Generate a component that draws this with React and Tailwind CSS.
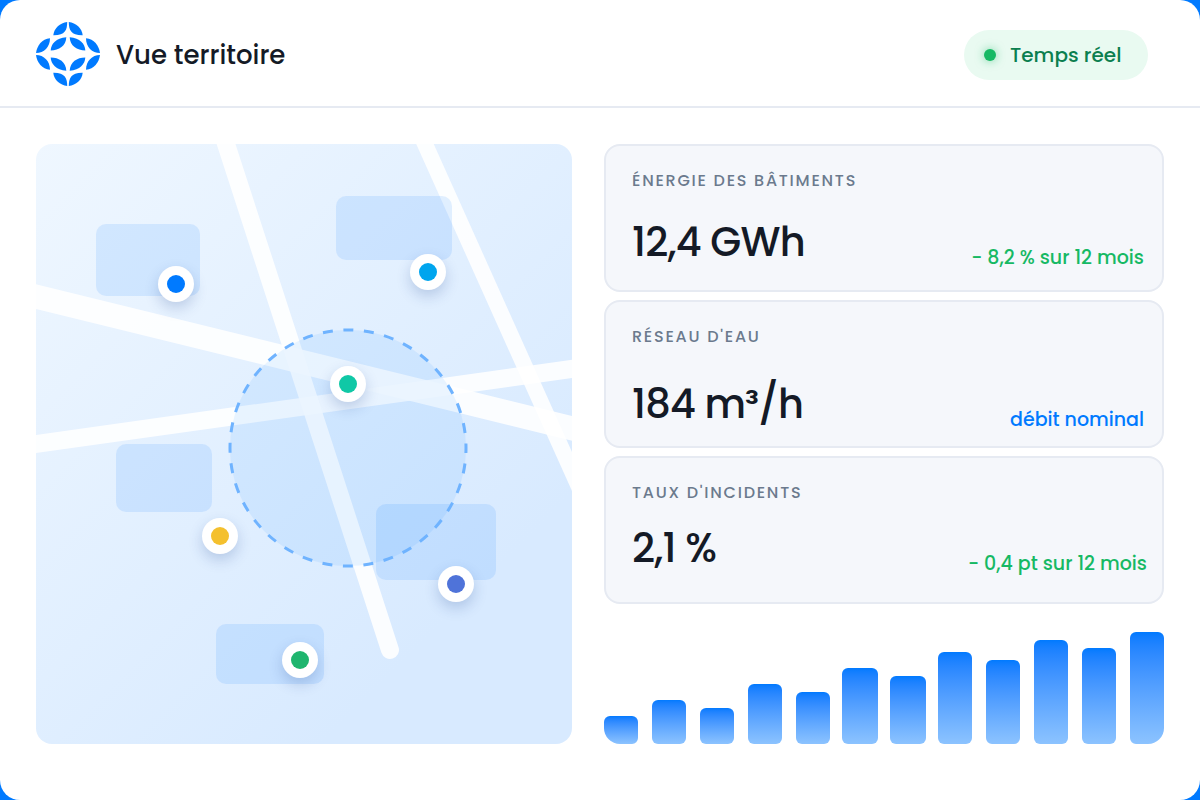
import React from "react";

const FONT = "font-['Poppins','Inter','Liberation_Sans',sans-serif]";

function Logo() {
  const leaves = [
    "M-14.7 -18.7 C-14 -26 -8 -31 -0.8 -32 C-0.8 -24 -3 -18.5 -14.7 -18.7 Z",
    "M-17.3 -3.5 C-17 -10 -12 -16 -1.7 -16.7 C-2 -8 -9 -3.5 -17.3 -3.5 Z",
    "M-32 -0.9 C-31 -8.5 -26 -15 -18 -15.7 C-18 -7 -24 -0.9 -32 -0.9 Z",
  ];
  const tf = ["scale(1 1)", "scale(-1 1)", "scale(1 -1)", "scale(-1 -1)"];
  return (
    <svg width="64" height="64" viewBox="-32 -32 64 64" className="shrink-0">
      {tf.map((t) => (
        <g key={t} transform={t} fill="#007aff">
          {leaves.map((d) => (
            <path key={d} d={d} />
          ))}
        </g>
      ))}
    </svg>
  );
}

function Pin({ pos, dot }) {
  return (
    <div
      className={`absolute w-9 h-9 rounded-full bg-white flex items-center justify-center shadow-[0_6px_14px_rgba(30,70,140,0.22)] ${pos}`}
    >
      <div className={`w-[18px] h-[18px] rounded-full ${dot}`} />
    </div>
  );
}

function Building({ pos }) {
  return <div className={`absolute rounded-[10px] bg-[rgba(0,122,255,0.11)] ${pos}`} />;
}

function MapPanel() {
  return (
    <div className="relative w-[536px] h-[600px] shrink-0 rounded-2xl overflow-hidden bg-[linear-gradient(135deg,#eff7ff_0%,#d8eaff_78%,#d8eaff_100%)]">
      <svg width="536" height="600" viewBox="0 0 536 600" className="absolute left-0 top-0">
        <g stroke="#ffffff" strokeOpacity="0.88" fill="none">
          <line x1="-20" y1="147.6" x2="560" y2="290.3" strokeWidth="24" />
          <line x1="-20" y1="302.8" x2="560" y2="221.6" strokeWidth="18" />
          <line x1="180.3" y1="-30" x2="354" y2="506" strokeWidth="18" strokeLinecap="round" />
          <line x1="375.5" y1="-30" x2="560" y2="381" strokeWidth="16" />
        </g>
      </svg>
      <Building pos="left-[60px] top-[80px] w-[104px] h-[72px]" />
      <Building pos="left-[300px] top-[52px] w-[116px] h-[64px]" />
      <Building pos="left-[80px] top-[300px] w-[96px] h-[68px]" />
      <Building pos="left-[340px] top-[360px] w-[120px] h-[76px]" />
      <Building pos="left-[180px] top-[480px] w-[108px] h-[60px]" />
      <svg width="536" height="600" viewBox="0 0 536 600" className="absolute left-0 top-0">
        <circle
          cx="312"
          cy="304"
          r="118"
          fill="rgba(0,122,255,0.08)"
          stroke="#6fb3ff"
          strokeWidth="3"
          strokeDasharray="10 10.6"
          strokeDashoffset="5"
        />
      </svg>
      <Pin pos="left-[122px] top-[122px]" dot="bg-[#007aff]" />
      <Pin pos="left-[374px] top-[110px]" dot="bg-[#00a5ee]" />
      <Pin pos="left-[294px] top-[222px]" dot="bg-[#10c8a6]" />
      <Pin pos="left-[166px] top-[374px]" dot="bg-[#f4c02e]" />
      <Pin pos="left-[402px] top-[422px]" dot="bg-[#4f73d9]" />
      <Pin pos="left-[246px] top-[498px]" dot="bg-[#1fb56e]" />
    </div>
  );
}

function Card({ label, value, note, noteColor, valueTop, noteClass }) {
  return (
    <div className="relative h-[148px] rounded-2xl bg-[#f5f7fb] border-2 border-[#e6eaf2] px-[26px] pt-[24px]">
      <div className="text-[16px] leading-[21px] font-medium tracking-[1.75px] text-[#6b7a8d] whitespace-nowrap">{label}</div>
      <div className={`text-[40px] leading-[48px] font-medium tracking-[-0.8px] text-[#141a26] ${valueTop}`}>{value}</div>
      <div className={`absolute text-[19px] leading-[24px] font-medium whitespace-nowrap ${noteClass} ${noteColor}`}>{note}</div>
    </div>
  );
}

const bars = [
  "w-[34px] h-[28px] rounded-t-[6px] rounded-br-[6px] rounded-bl-[16px]",
  "w-[34px] h-[44px] rounded-[6px]",
  "w-[34px] h-[36px] rounded-[6px]",
  "w-[34px] h-[60px] rounded-[6px]",
  "w-[34px] h-[52px] rounded-[6px]",
  "w-[36px] h-[76px] rounded-[6px] -ml-[2px]",
  "w-[36px] h-[68px] rounded-[6px] -ml-[2px]",
  "w-[34px] h-[92px] rounded-[6px] -ml-[2px]",
  "w-[34px] h-[84px] rounded-[6px]",
  "w-[34px] h-[104px] rounded-[6px]",
  "w-[34px] h-[96px] rounded-[6px]",
  "w-[34px] h-[112px] rounded-t-[6px] rounded-bl-[6px] rounded-br-[16px]",
];

export default function App() {
  return (
    <div className={`w-[1200px] h-[800px] bg-[#007aff] overflow-hidden ${FONT}`}>
      <div className="w-full h-full bg-white rounded-[20px] flex flex-col">
        <header className="h-[108px] shrink-0 border-b-2 border-[#e6eaf2] flex items-center justify-between pt-[2px] pl-9 pr-[52px]">
          <div className="flex items-center gap-4">
            <Logo />
            <span className="text-[26px] leading-[39px] mt-[2px] font-medium text-[#141a26]">Vue territoire</span>
          </div>
          <div className="h-[50px] w-[184px] mt-[2px] rounded-full bg-[#e9faf1] flex items-center pl-5 gap-[14px]">
            <span className="w-3 h-3 rounded-full bg-[#16b964] shadow-[0_0_10px_rgba(22,185,100,0.55)]" />
            <span className="text-[20px] font-medium text-[#0b7f4f]">Temps réel</span>
          </div>
        </header>
        <main className="flex gap-8 px-9 pt-9">
          <MapPanel />
          <div className="w-[560px] flex flex-col">
            <div className="flex flex-col gap-2">
              <Card
                label="ÉNERGIE DES BÂTIMENTS"
                value="12,4 GWh"
                note="- 8,2 % sur 12 mois"
                noteColor="text-[#16b964]"
                valueTop="mt-[27px]"
                noteClass="right-[18px] top-[100px]"
              />
              <Card
                label="RÉSEAU D'EAU"
                value="184 m³/h"
                note="débit nominal"
                noteColor="text-[#007aff]"
                valueTop="mt-[33px]"
                noteClass="right-[18px] top-[106px]"
              />
              <Card
                label="TAUX D'INCIDENTS"
                value="2,1 %"
                note="- 0,4 pt sur 12 mois"
                noteColor="text-[#16b964]"
                valueTop="mt-[21px]"
                noteClass="right-[15px] top-[94px]"
              />
            </div>
            <div className="h-[112px] mt-[28px] flex items-end gap-[14px]">
              {bars.map((c) => (
                <div key={c} className={`shrink-0 bg-gradient-to-b from-[#007aff] to-[#8cc3ff] ${c}`} />
              ))}
            </div>
          </div>
        </main>
      </div>
    </div>
  );
}
